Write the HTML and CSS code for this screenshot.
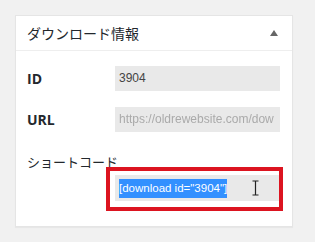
FILE: index.html
```html
<!DOCTYPE html>
<html lang="ja">
<head>
    <meta charset="UTF-8">
    <meta name="viewport" content="width=device-width, initial-scale=1.0">
    <title>ダウンロード情報</title>
    <link rel="stylesheet" href="styles.css">
</head>
<body>

    <div class="postbox">
        <div class="postbox-header">
            <h2>ダウンロード情報</h2>
            <span class="toggle"></span>
        </div>

        <div class="inside">
            <div class="row">
                <label>ID</label>
                <div class="field">3904</div>
            </div>
            <div class="row">
                <label>URL</label>
                <div class="field url">https://oldrewebsite.com/dow</div>
            </div>

            <div class="shortcode-label">ショートコード</div>
            <div class="shortcode-wrap">
                <div class="field shortcode"><span class="selected">[download id="3904"]</span></div>
                <svg class="ibeam" width="7" height="16" viewBox="0 0 7 16">
                    <path d="M0.5 1h6M3.5 1v14M0.5 15h6" stroke="#222" stroke-width="1.2" fill="none"/>
                </svg>
                <div class="highlight"></div>
            </div>
        </div>
    </div>

</body>
</html>
```

FILE: styles.css
```css
body {
    margin: 0;
    padding: 15px;
    background: #f1f1f1;
    font-family: "Noto Sans CJK JP", "Noto Sans", sans-serif;
    color: #23282d;
}

.postbox {
    width: 276px;
    background: white;
    border: 1px solid #e5e5e5;
    box-shadow: 0 1px 1px rgba(0,0,0,0.04);
    padding-bottom: 25px;
}

.postbox-header {
    height: 34px;
    border-bottom: 1px solid #eee;
    display: flex;
    align-items: center;
    justify-content: space-between;
    padding: 0 14px 0 11px;
}
.postbox-header h2 {
    margin: 0;
    font-size: 14px;
    font-weight: normal;
    color: #23282d;
}
.toggle {
    width: 0;
    height: 0;
    border-left: 4px solid transparent;
    border-right: 4px solid transparent;
    border-bottom: 6px solid #666;
}

.inside { padding-top: 15px; }

.row {
    display: flex;
    align-items: center;
    height: 25px;
    margin-bottom: 16px;
}
.row label {
    width: 88px;
    padding-left: 11px;
    font-family: "Open Sans", sans-serif;
    font-weight: bold;
    font-size: 14px;
    color: #23282d;
}

.field {
    width: 161px;
    height: 25px;
    line-height: 25px;
    padding-left: 4px;
    background: #e9e9e9;
    font-family: "Liberation Sans", Arial, sans-serif;
    font-size: 12px;
    color: #444;
    overflow: hidden;
    white-space: nowrap;
}
.url {
    color: #aaa;
    filter: blur(0.6px);
}

.shortcode-label {
    margin-top: 21px;
    padding-left: 11px;
    font-size: 13px;
    line-height: 18px;
}

.shortcode-wrap {
    position: relative;
    margin: 4px 0 0 99px;
    width: 165px;
}
.shortcode {
    height: 26px;
    line-height: 26px;
    padding-left: 4px;
    font-size: 11.5px;
}
.selected {
    background: #3390ff;
    color: white;
    padding: 3px 0 4px;
}
.ibeam {
    position: absolute;
    left: 137px;
    top: 5px;
}
/* red annotation frame */
.highlight {
    position: absolute;
    left: -9px;
    top: -8px;
    width: 169px;
    height: 36px;
    border: 4px solid #dc1420;
}
```
